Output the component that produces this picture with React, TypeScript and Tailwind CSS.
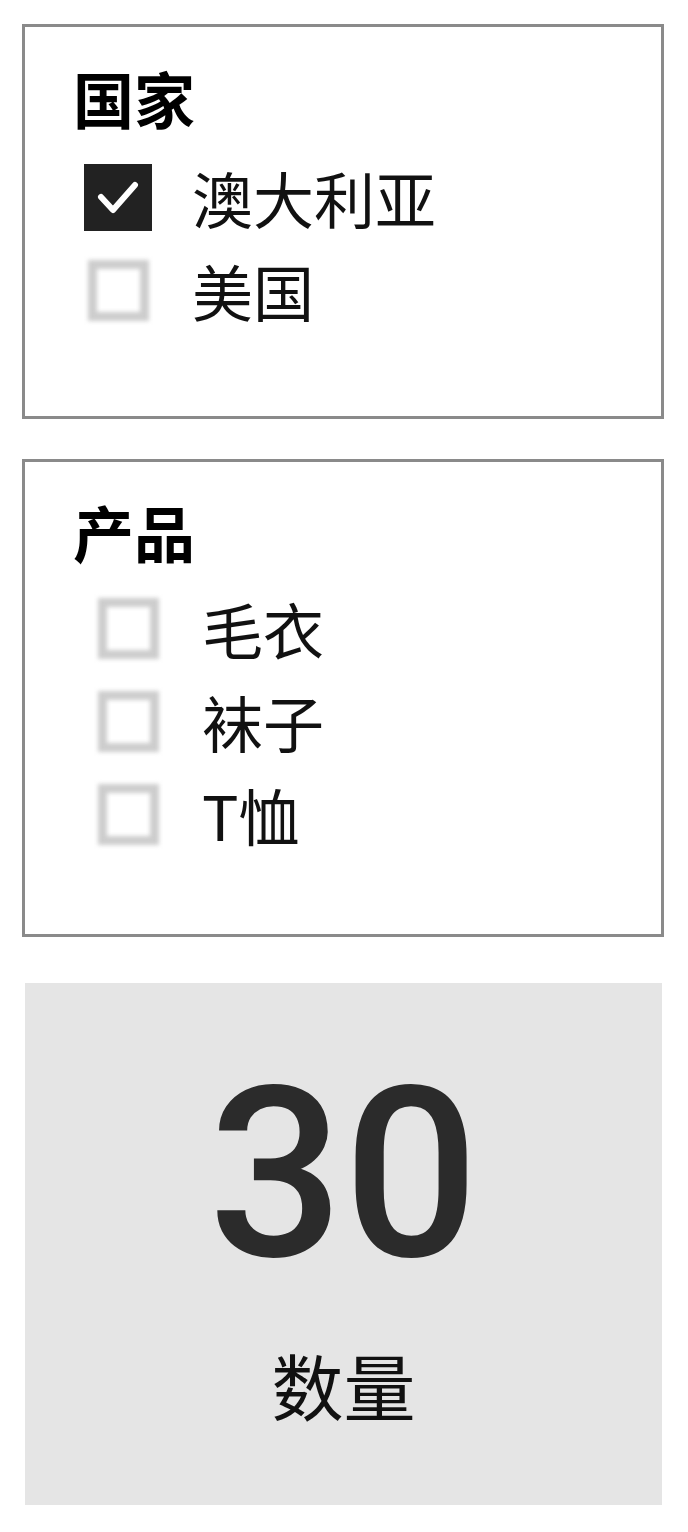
import React from "react";

const cjk = "font-['Noto_Sans_CJK_SC','Noto_Sans',sans-serif]";

function Box({ checked }: { checked: boolean }) {
  if (checked) {
    return (
      <div className="w-[68px] h-[67px] bg-[#222222] shrink-0 flex items-center justify-center">
        <svg width="68" height="67" viewBox="0 0 68 67">
          <polyline
            points="17,33 29,46 51,21"
            fill="none"
            stroke="#ffffff"
            strokeWidth="6"
            strokeLinecap="round"
            strokeLinejoin="round"
          />
        </svg>
      </div>
    );
  }
  return (
    <div className="w-[68px] h-[67px] shrink-0 flex items-center justify-center">
      <div className="w-[61px] h-[61px] border-[9px] border-[#cdcdcd] blur-[2px]" />
    </div>
  );
}

function Row({ checked, label, offset }: { checked: boolean; label: string; offset: boolean }) {
  return (
    <div className={`h-[93px] flex items-center ${offset ? "pl-[69px]" : "pl-[59px]"}`}>
      <Box checked={checked} />
      <span className={`ml-[40px] text-[61px] leading-none text-[#111111] ${cjk}`}>{label}</span>
    </div>
  );
}

export default function App() {
  return (
    <div className="w-[688px] min-h-[1532px] bg-white pt-[24px] pb-[27px]">
      <div className="ml-[22px] w-[642px] border-[3px] border-[#8a8a8a] pt-[40px] pb-[79px]">
        <div className={`h-[60px] pl-[48px] flex items-center text-[61px] leading-none font-bold text-black ${cjk}`}>
          国家
        </div>
        <div className="mt-[24px]">
          <Row checked={true} label="澳大利亚" offset={false} />
          <Row checked={false} label="美国" offset={false} />
        </div>
      </div>

      <div className="mt-[40px] ml-[22px] w-[642px] border-[3px] border-[#8a8a8a] pt-[39px] pb-[73px]">
        <div className={`h-[60px] pl-[48px] flex items-center text-[61px] leading-none font-bold text-black ${cjk}`}>
          产品
        </div>
        <div className="mt-[21px]">
          <Row checked={false} label="毛衣" offset={true} />
          <Row checked={false} label="袜子" offset={true} />
          <Row checked={false} label="T恤" offset={true} />
        </div>
      </div>

      <div className="mt-[46px] ml-[25px] w-[637px] h-[522px] bg-[#e5e5e5] pt-[73px] flex flex-col items-center">
        <div className="text-[238px] leading-none font-medium text-[#2b2b2b] font-['Roboto',sans-serif]">30</div>
        <div className={`mt-[54px] text-[72px] leading-none text-[#111111] ${cjk}`}>数量</div>
      </div>
    </div>
  );
}
